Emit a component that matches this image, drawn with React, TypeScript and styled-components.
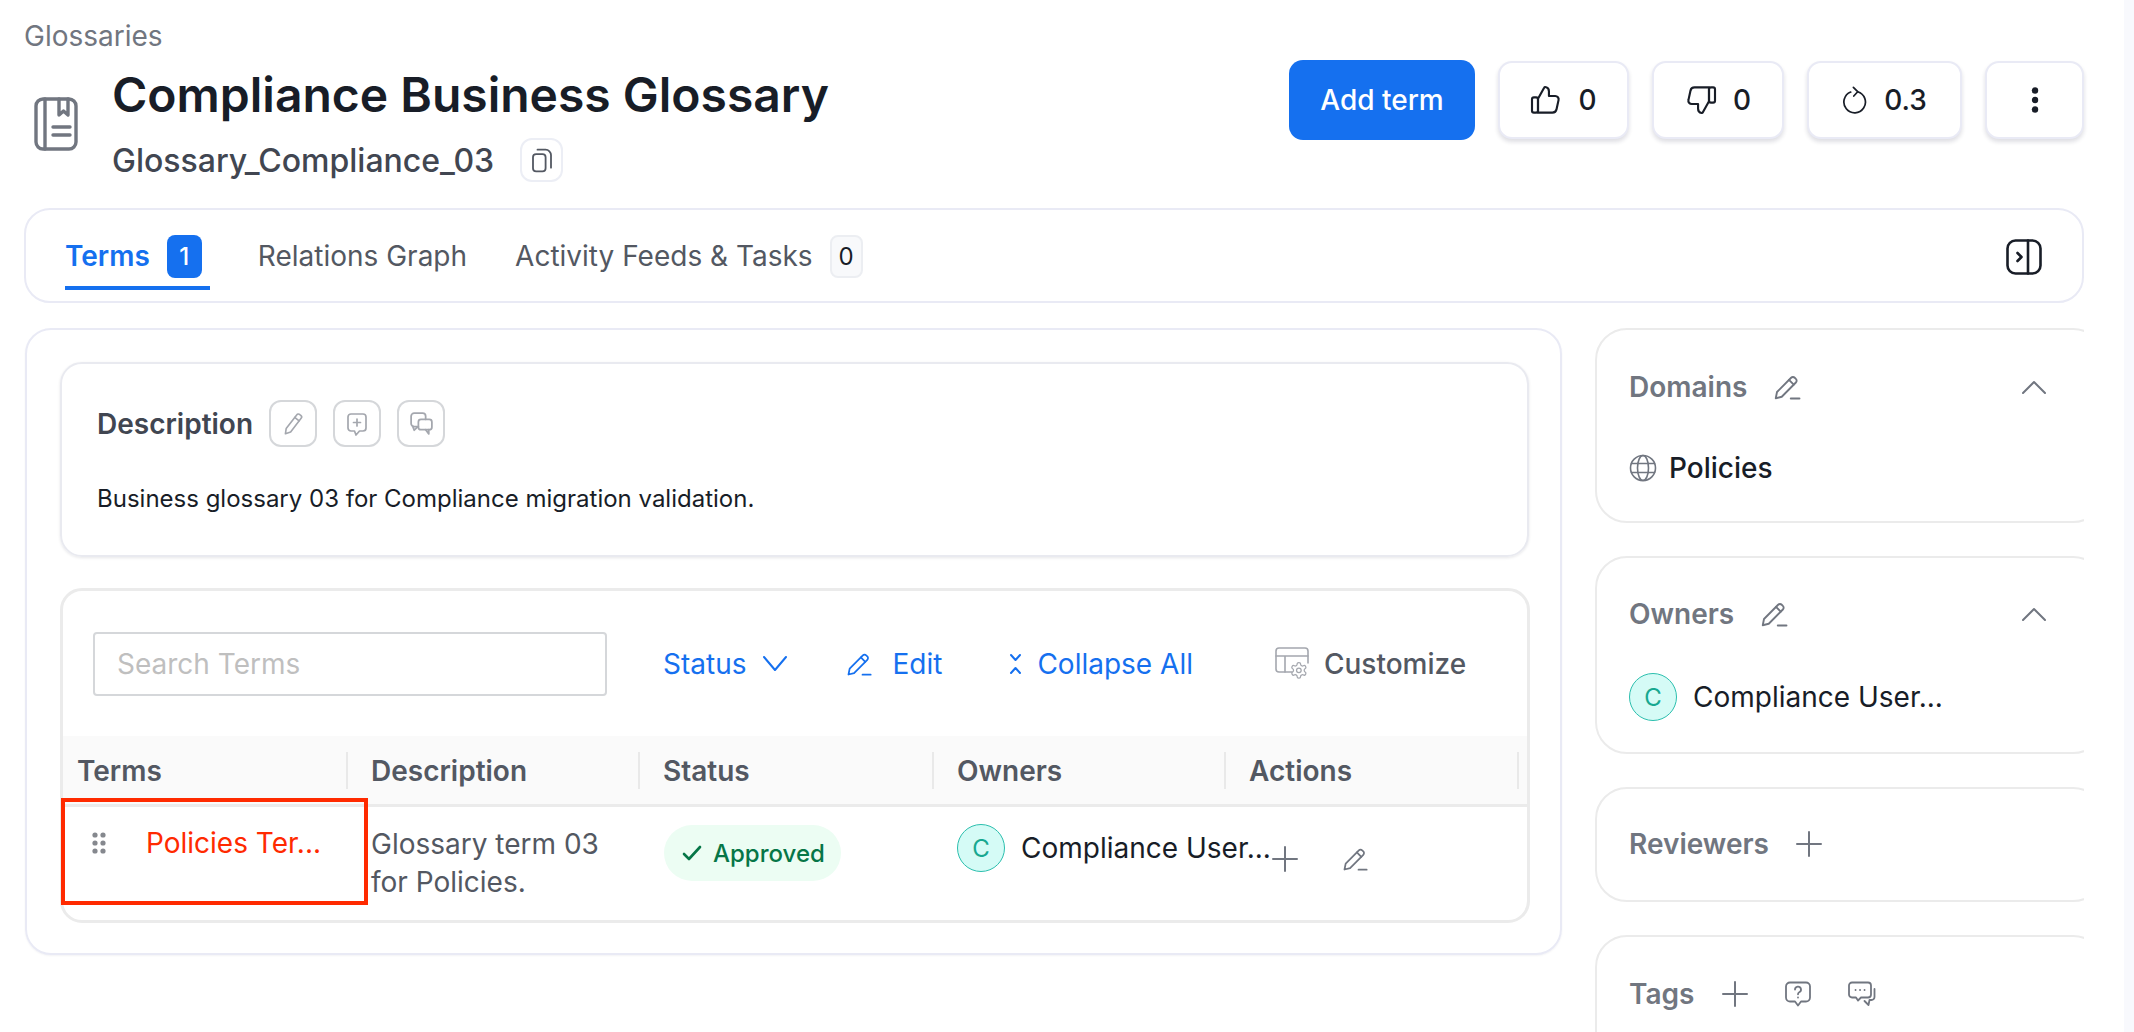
import React from 'react';
import styled, { createGlobalStyle } from 'styled-components';

const GlobalStyle = createGlobalStyle`
  html, body {
    margin: 0;
    padding: 0;
    height: 100%;
    overflow: hidden;
    background: #fff;
    font-family: Inter, "Noto Sans", sans-serif;
  }
  * { box-sizing: border-box; }
`;

const Page = styled.div`
  display: flex;
  height: 1032px;
  overflow: hidden;
`;

const Content = styled.main`
  width: 2124px;
  padding: 22px 40px 0 24px;
  flex-shrink: 0;
`;

const ScrollStrip = styled.div`
  width: 10px;
  background: #f8f9fd;
`;

const Breadcrumb = styled.div`
  height: 29px;
  line-height: 29px;
  font-size: 28px;
  color: #717680;
  margin-bottom: 9px;
`;

const Header = styled.header`
  display: flex;
  justify-content: space-between;
  align-items: flex-start;
  height: 122px;
  padding-left: 10px;
`;

const TitleGroup = styled.div`
  display: flex;
  gap: 34px;
  > svg { margin-top: 37px; flex-shrink: 0; }
`;

const Title = styled.h1`
  margin: 0;
  font-size: 48px;
  line-height: 70px;
  font-weight: 600;
  color: #181d27;
`;

const IdRow = styled.div`
  display: flex;
  align-items: center;
  gap: 26px;
  margin-top: 8px;
  height: 44px;
`;

const IdText = styled.span`
  font-size: 32px;
  font-weight: 500;
  color: #414651;
`;

const CopyButton = styled.button`
  width: 43px;
  height: 44px;
  padding: 0;
  border: 2px solid #eceef5;
  border-radius: 12px;
  background: #fff;
  display: flex;
  align-items: center;
  justify-content: center;
`;

const Actions = styled.div`
  display: flex;
  gap: 23px;
`;

const PrimaryButton = styled.button`
  width: 186px;
  height: 80px;
  border: 0;
  border-radius: 14px;
  background: #1570ef;
  color: #fff;
  font: 500 28px Inter, sans-serif;
`;

const VoteButton = styled.button<{ $width: number }>`
  width: ${(p) => p.$width}px;
  height: 78px;
  margin-top: 1px;
  border: 2px solid #e9eaf5;
  border-radius: 14px;
  background: #fff;
  box-shadow: 0 3px 4px rgba(20, 24, 60, 0.14);
  color: #181d27;
  font: 500 28px Inter, sans-serif;
  display: flex;
  align-items: center;
  justify-content: center;
  gap: 16px;
`;

const TabCard = styled.nav`
  display: flex;
  justify-content: space-between;
  align-items: center;
  height: 95px;
  margin-top: 26px;
  padding: 0 40px 0 39px;
  border: 2px solid #e9eaf5;
  border-radius: 26px;
  > svg { margin-top: 2px; }
`;

const TabList = styled.div`
  display: flex;
  gap: 48px;
  align-self: stretch;
`;

const Tab = styled.div<{ $active?: boolean }>`
  display: flex;
  align-items: center;
  gap: 17px;
  height: 58px;
  margin-top: 22px;
  padding-right: ${(p) => (p.$active ? 8 : 0)}px;
  padding-bottom: 6px;
  font-size: 28px;
  font-weight: ${(p) => (p.$active ? 600 : 400)};
  color: ${(p) => (p.$active ? '#1570ef' : '#535862')};
  border-bottom: 4px solid ${(p) => (p.$active ? '#1570ef' : 'transparent')};
`;

const TabBadge = styled.span<{ $active?: boolean }>`
  width: ${(p) => (p.$active ? 35 : 33)}px;
  height: 43px;
  border-radius: 8px;
  font-size: 24px;
  font-weight: ${(p) => (p.$active ? 500 : 400)};
  display: flex;
  align-items: center;
  justify-content: center;
  background: ${(p) => (p.$active ? '#1570ef' : '#f8f9fb')};
  color: ${(p) => (p.$active ? '#fff' : '#181d27')};
  border: ${(p) => (p.$active ? 0 : '2px solid #eceef2')};
`;

const Body = styled.div`
  display: flex;
  gap: 33px;
  margin-top: 25px;
  margin-left: 1px;
  align-items: flex-start;
`;

const MainCard = styled.section`
  width: 1537px;
  height: 627px;
  flex-shrink: 0;
  padding: 32px 31px 0 33px;
  border: 2px solid #e9eaf5;
  border-radius: 26px;
  box-shadow: 0 1px 2px rgba(20, 24, 60, 0.05);
`;

const DescriptionCard = styled.div`
  height: 195px;
  padding: 36px 26px 0 35px;
  border: 2px solid #e9eaf0;
  border-radius: 22px;
  box-shadow: 0 1px 3px rgba(20, 24, 40, 0.1);
`;

const DescriptionHead = styled.div`
  display: flex;
  align-items: center;
  gap: 16px;
`;

const DescriptionLabel = styled.span`
  font-size: 28px;
  font-weight: 600;
  color: #414651;
`;

const IconButton = styled.button`
  width: 48px;
  height: 47px;
  padding: 0;
  border: 2px solid #d5d7da;
  border-radius: 12px;
  background: #fff;
  display: flex;
  align-items: center;
  justify-content: center;
`;

const DescriptionText = styled.p`
  margin: 37px 0 0;
  font-size: 24px;
  line-height: 30px;
  color: #181d27;
`;

const TermsCard = styled.div`
  width: 1470px;
  height: 335px;
  margin-top: 31px;
  border: 3px solid #ebebeb;
  border-radius: 22px;
  overflow: visible;
`;

const Toolbar = styled.div`
  display: flex;
  align-items: center;
  height: 145px;
  padding-left: 30px;
`;

const SearchInput = styled.input`
  width: 514px;
  height: 64px;
  padding: 0 22px;
  border: 2px solid #d5d7da;
  border-radius: 4px;
  font: 400 28px Inter, sans-serif;
  &::placeholder { color: #bfbfbf; }
`;

const ToolLink = styled.span<{ $gap: number; $left: number; $muted?: boolean }>`
  display: flex;
  align-items: center;
  gap: ${(p) => p.$gap}px;
  margin-left: ${(p) => p.$left}px;
  font-size: 28px;
  font-weight: ${(p) => (p.$muted ? 500 : 400)};
  color: ${(p) => (p.$muted ? '#535862' : '#1570ef')};
`;

const TableHead = styled.div`
  display: grid;
  grid-template-columns: 285px 292px 294px 292px 293px;
  height: 71px;
  background: #fafafa;
  border-bottom: 3px solid #ebebeb;
  align-items: center;
`;

const HeadCell = styled.div<{ $first?: boolean }>`
  height: 37px;
  line-height: 39px;
  padding-left: ${(p) => (p.$first ? 14 : 23)}px;
  font-size: 28px;
  font-weight: 600;
  color: #535862;
  border-right: 2px solid #e9e9e9;
`;

const TableRow = styled.div`
  position: relative;
  display: grid;
  grid-template-columns: 285px 292px 294px 292px 293px;
  height: 110px;
`;

const RedBox = styled.div`
  position: absolute;
  left: -2px;
  top: -9px;
  width: 307px;
  height: 107px;
  border: 4px solid #ff2a00;
`;

const TermCell = styled.div`
  display: flex;
  align-items: center;
  gap: 40px;
  height: 72px;
  padding-left: 29px;
`;

const TermName = styled.span`
  font-size: 28px;
  color: #ff2a00;
`;

const DescCell = styled.div`
  padding: 18px 0 0 23px;
  font-size: 28px;
  line-height: 38px;
  color: #535862;
`;

const StatusCell = styled.div`
  padding: 18px 0 0 24px;
`;

const StatusBadge = styled.span`
  display: inline-flex;
  align-items: center;
  gap: 11px;
  width: 177px;
  height: 56px;
  padding-left: 18px;
  border-radius: 28px;
  background: #ecfdf3;
  color: #067647;
  font-size: 24px;
  font-weight: 500;
`;

const OwnerCell = styled.div`
  display: flex;
  align-items: center;
  gap: 16px;
  height: 48px;
  margin-top: 17px;
  padding-left: 23px;
`;

const Avatar = styled.span`
  width: 48px;
  height: 48px;
  flex-shrink: 0;
  border-radius: 50%;
  border: 1px solid #2bbfae;
  background: #d5fbf6;
  color: #17a890;
  font-size: 24px;
  display: flex;
  align-items: center;
  justify-content: center;
`;

const OwnerName = styled.span`
  font-size: 28px;
  white-space: nowrap;
  color: #181d27;
`;

const ActionCell = styled.div`
  display: flex;
  align-items: center;
  gap: 43px;
  height: 28px;
  margin-top: 38px;
  padding-left: 46px;
`;

const Sidebar = styled.aside`
  width: 489px;
  flex-shrink: 0;
  overflow: hidden;
  display: flex;
  flex-direction: column;
  gap: 33px;
`;

const SideCard = styled.div<{ $height: number }>`
  width: 510px;
  height: ${(p) => p.$height}px;
  padding: 0 0 0 32px;
  border: 2px solid #ebebeb;
  border-radius: 32px;
`;

const SideHead = styled.div<{ $gap: number; $top: number }>`
  display: flex;
  align-items: center;
  gap: ${(p) => p.$gap}px;
  height: 30px;
  margin-top: ${(p) => p.$top}px;
  width: 417px;
`;

const SideTitle = styled.span`
  font-size: 28px;
  font-weight: 600;
  color: #717680;
`;

const TagIcons = styled.span`
  display: flex;
  align-items: center;
  gap: 36px;
`;

const Chevron = styled.span`
  margin-left: auto;
  display: flex;
`;

const SideValue = styled.div<{ $top: number; $gap: number; $regular?: boolean }>`
  display: flex;
  align-items: center;
  gap: ${(p) => p.$gap}px;
  margin-top: ${(p) => p.$top}px;
  font-size: 28px;
  font-weight: ${(p) => (p.$regular ? 400 : 500)};
  color: #181d27;
`;

const icon = (w: number, h: number, view: string, color: string, sw = 1.5) => ({
  width: w,
  height: h,
  viewBox: view,
  fill: 'none',
  stroke: color,
  strokeWidth: sw,
  strokeLinecap: 'round' as const,
  strokeLinejoin: 'round' as const,
});

const PenLine = ({ size, color }: { size: number; color: string }) => (
  <svg {...icon(size, size, '0 0 24 24', color)}>
    <path d="M3 21l1-5L15.3 4.6a2 2 0 0 1 2.9 0l.9.9a2 2 0 0 1 0 2.9L7.8 19.8 3 21z" />
    <path d="M13.6 6.3l3.8 3.8" />
    <path d="M15 21.2h7" />
  </svg>
);

const Pencil = ({ color }: { color: string }) => (
  <svg {...icon(26, 26, '0 0 24 24', color)}>
    <path d="M5 21l.7-4.8L15.4 3.6a2 2 0 0 1 2.9-.3l.9.7a2 2 0 0 1 .3 2.8L9.8 19.4 5 21z" />
    <path d="M13.6 5.9l4 3.2" />
  </svg>
);

const Plus = ({ color }: { color: string }) => (
  <svg {...icon(26, 26, '0 0 26 26', color, 2)}>
    <path d="M13 1v24M1 13h24" />
  </svg>
);

const ChevronUp = () => (
  <svg {...icon(24, 14, '0 0 24 14', '#717680', 2)}>
    <path d="M1 13L12 2l11 11" />
  </svg>
);

const Book = () => (
  <svg {...icon(44, 54, '0 0 44 54', '#717680', 3.4)}>
    <rect x="2" y="2" width="40" height="50" rx="7" />
    <path d="M11 2v50" />
    <path d="M25 2v16l4.5-4 4.5 4V2" />
    <path d="M19 30h17M19 38h17" />
  </svg>
);

const Copy = () => (
  <svg {...icon(24, 27, '0 0 26 30', '#535862', 2)}>
    <rect x="3" y="8" width="14" height="19" rx="3.5" />
    <path d="M8 3h9a6 6 0 0 1 6 6v14" />
  </svg>
);

const ThumbUp = () => (
  <svg {...icon(32, 32, '0 0 24 24', '#181d27', 1.6)}>
    <rect x="1.5" y="10" width="4.5" height="11.5" rx="1.4" />
    <path d="M6 11l4.6-8.2c.2-.4.6-.6 1-.5 1.6.3 2.6 1.6 2.6 3.2V9h4.7c1.7 0 2.9 1.5 2.5 3.1l-1.5 6.9c-.3 1.5-1.6 2.5-3.1 2.5H6z" />
  </svg>
);

const ThumbDown = () => (
  <svg {...icon(32, 32, '0 0 24 24', '#181d27', 1.6)}>
    <g transform="rotate(180 12 12)">
      <rect x="1.5" y="10" width="4.5" height="11.5" rx="1.4" />
      <path d="M6 11l4.6-8.2c.2-.4.6-.6 1-.5 1.6.3 2.6 1.6 2.6 3.2V9h4.7c1.7 0 2.9 1.5 2.5 3.1l-1.5 6.9c-.3 1.5-1.6 2.5-3.1 2.5H6z" />
    </g>
  </svg>
);

const Version = () => (
  <svg {...icon(26, 28, '0 0 24 26', '#181d27', 1.6)}>
    <path d="M14.5 5.3A10 10 0 1 1 8 5.6" />
    <path d="M10.5 1.3l4 4-3.6 4" />
  </svg>
);

const Dots = () => (
  <svg width="8" height="26" viewBox="0 0 8 26" fill="#181d27">
    <circle cx="4" cy="3.5" r="3.2" />
    <circle cx="4" cy="13" r="3.2" />
    <circle cx="4" cy="22.5" r="3.2" />
  </svg>
);

const PanelToggle = () => (
  <svg {...icon(36, 36, '0 0 36 36', '#181d27', 2.6)}>
    <rect x="1.5" y="1.5" width="33" height="33" rx="8" />
    <path d="M22 1.5v33" />
    <path d="M11.5 14l4 4-4 4" />
  </svg>
);

const CommentPlus = () => (
  <svg {...icon(24, 26, '0 0 24 26', '#a4a7ae', 1.7)}>
    <path d="M6 3h12a3 3 0 0 1 3 3v11a3 3 0 0 1-3 3h-3.5L11 24l-1.5-4H6a3 3 0 0 1-3-3V6a3 3 0 0 1 3-3z" />
    <path d="M12 8v7M8.5 11.5h7" />
  </svg>
);

const Comments = () => (
  <svg {...icon(25, 27, '0 0 24 26', '#a4a7ae', 1.7)}>
    <path d="M9 16H5a3 3 0 0 1-3-3V6a3 3 0 0 1 3-3h8a3 3 0 0 1 3 3v3" />
    <path d="M3.5 15.5l1.5 4 3-3" />
    <rect x="9" y="9" width="13" height="10" rx="2.5" />
    <path d="M16 19l3 4v-4" />
  </svg>
);

const CollapseAll = () => (
  <svg {...icon(13, 22, '0 0 13 22', '#1570ef', 2)}>
    <path d="M2 2l4.5 5L11 2" />
    <path d="M2 20l4.5-5 4.5 5" />
  </svg>
);

const Customize = () => (
  <svg {...icon(34, 34, '0 0 34 34', '#a4a7ae', 1.6)}>
    <path d="M17 25H4a3 3 0 0 1-3-3V4a3 3 0 0 1 3-3h26a3 3 0 0 1 3 3v12" />
    <path d="M1 9h32M10 9v16" />
    <g transform="translate(14.5 14) scale(0.78)">
      <path d="M12.22 2h-.44a2 2 0 0 0-2 2v.18a2 2 0 0 1-1 1.73l-.43.25a2 2 0 0 1-2 0l-.15-.08a2 2 0 0 0-2.73.73l-.22.38a2 2 0 0 0 .73 2.73l.15.1a2 2 0 0 1 1 1.72v.51a2 2 0 0 1-1 1.74l-.15.09a2 2 0 0 0-.73 2.73l.22.38a2 2 0 0 0 2.73.73l.15-.08a2 2 0 0 1 2 0l.43.25a2 2 0 0 1 1 1.73V20a2 2 0 0 0 2 2h.44a2 2 0 0 0 2-2v-.18a2 2 0 0 1 1-1.73l.43-.25a2 2 0 0 1 2 0l.15.08a2 2 0 0 0 2.73-.73l.22-.39a2 2 0 0 0-.73-2.73l-.15-.08a2 2 0 0 1-1-1.74v-.5a2 2 0 0 1 1-1.74l.15-.09a2 2 0 0 0 .73-2.73l-.22-.38a2 2 0 0 0-2.73-.73l-.15.08a2 2 0 0 1-2 0l-.43-.25a2 2 0 0 1-1-1.73V4a2 2 0 0 0-2-2z" fill="#fff" />
      <circle cx="12" cy="12" r="3" />
    </g>
  </svg>
);

const StatusChevron = () => (
  <svg {...icon(24, 15, '0 0 24 15', '#1570ef', 2)}>
    <path d="M1 1l11 13L23 1" />
  </svg>
);

const Grip = () => (
  <svg width="14" height="22" viewBox="0 0 14 22" fill="#85888e">
    {[3, 11, 19].map((y) => (
      <g key={y}>
        <circle cx="3" cy={y} r="2.6" />
        <circle cx="11" cy={y} r="2.6" />
      </g>
    ))}
  </svg>
);

const Check = () => (
  <svg {...icon(20, 16, '0 0 20 16', '#067647', 2.6)}>
    <path d="M2 9l5 5L18 2" />
  </svg>
);

const Globe = () => (
  <svg {...icon(28, 28, '0 0 28 28', '#717680', 1.6)}>
    <circle cx="14" cy="14" r="12.5" />
    <ellipse cx="14" cy="14" rx="5.5" ry="12.5" />
    <path d="M2.5 9.5h23M2.5 18.5h23" />
  </svg>
);

const Question = () => (
  <svg {...icon(28, 26, '0 0 28 26', '#717680', 1.8)}>
    <path d="M6 1.5h16a4 4 0 0 1 4 4v11a4 4 0 0 1-4 4h-5l-3 4-3-4H6a4 4 0 0 1-4-4v-11a4 4 0 0 1 4-4z" />
    <path d="M11 8.5a3 3 0 1 1 4.2 2.8c-.8.4-1.2 1-1.2 2" />
    <path d="M14 16.4v.1" />
  </svg>
);

const Conversation = () => (
  <svg {...icon(28, 26, '0 0 28 26', '#717680', 1.8)}>
    <path d="M4 1.5h16a3 3 0 0 1 3 3v9a3 3 0 0 1-3 3h-7l-3 3-2-3H4a3 3 0 0 1-3-3v-9a3 3 0 0 1 3-3z" />
    <path d="M26.5 8v8a3 3 0 0 1-3 3h-2l-1 5-4-4" />
    <path d="M7.5 9h.1M12 9h.1M16.5 9h.1" />
  </svg>
);

export default function App() {
  return (
    <>
      <GlobalStyle />
      <Page>
        <Content>
          <Breadcrumb>Glossaries</Breadcrumb>
          <Header>
            <TitleGroup>
              <Book />
              <div>
                <Title>Compliance Business Glossary</Title>
                <IdRow>
                  <IdText>Glossary_Compliance_03</IdText>
                  <CopyButton><Copy /></CopyButton>
                </IdRow>
              </div>
            </TitleGroup>
            <Actions>
              <PrimaryButton>Add term</PrimaryButton>
              <VoteButton $width={131}><ThumbUp />0</VoteButton>
              <VoteButton $width={132}><ThumbDown />0</VoteButton>
              <VoteButton $width={155}><Version />0.3</VoteButton>
              <VoteButton $width={99}><Dots /></VoteButton>
            </Actions>
          </Header>

          <TabCard>
            <TabList>
              <Tab $active>Terms<TabBadge $active>1</TabBadge></Tab>
              <Tab>Relations Graph</Tab>
              <Tab>Activity Feeds &amp; Tasks<TabBadge>0</TabBadge></Tab>
            </TabList>
            <PanelToggle />
          </TabCard>

          <Body>
            <MainCard>
              <DescriptionCard>
                <DescriptionHead>
                  <DescriptionLabel>Description</DescriptionLabel>
                  <IconButton><Pencil color="#a4a7ae" /></IconButton>
                  <IconButton><CommentPlus /></IconButton>
                  <IconButton><Comments /></IconButton>
                </DescriptionHead>
                <DescriptionText>Business glossary 03 for Compliance migration validation.</DescriptionText>
              </DescriptionCard>

              <TermsCard>
                <Toolbar>
                  <SearchInput placeholder="Search Terms" />
                  <ToolLink $gap={17} $left={56}>Status <StatusChevron /></ToolLink>
                  <ToolLink $gap={19} $left={58}><PenLine size={28} color="#1570ef" />Edit</ToolLink>
                  <ToolLink $gap={15} $left={67}><CollapseAll />Collapse All</ToolLink>
                  <ToolLink $gap={15} $left={82} $muted><Customize />Customize</ToolLink>
                </Toolbar>
                <TableHead>
                  <HeadCell $first>Terms</HeadCell>
                  <HeadCell>Description</HeadCell>
                  <HeadCell>Status</HeadCell>
                  <HeadCell>Owners</HeadCell>
                  <HeadCell>Actions</HeadCell>
                </TableHead>
                <TableRow>
                  <TermCell><Grip /><TermName>Policies Ter...</TermName></TermCell>
                  <DescCell>Glossary term 03<br />for Policies.</DescCell>
                  <StatusCell><StatusBadge><Check />Approved</StatusBadge></StatusCell>
                  <OwnerCell><Avatar>C</Avatar><OwnerName>Compliance User...</OwnerName></OwnerCell>
                  <ActionCell><Plus color="#717680" /><PenLine size={28} color="#717680" /></ActionCell>
                  <RedBox />
                </TableRow>
              </TermsCard>
            </MainCard>

            <Sidebar>
              <SideCard $height={195}>
                <SideHead $gap={25} $top={42}>
                  <SideTitle>Domains</SideTitle>
                  <PenLine size={30} color="#717680" />
                  <Chevron><ChevronUp /></Chevron>
                </SideHead>
                <SideValue $top={49} $gap={12}><Globe />Policies</SideValue>
              </SideCard>
              <SideCard $height={198}>
                <SideHead $gap={25} $top={41}>
                  <SideTitle>Owners</SideTitle>
                  <PenLine size={30} color="#717680" />
                  <Chevron><ChevronUp /></Chevron>
                </SideHead>
                <SideValue $top={44} $gap={16} $regular><Avatar>C</Avatar>Compliance User...</SideValue>
              </SideCard>
              <SideCard $height={115}>
                <SideHead $gap={27} $top={40}>
                  <SideTitle>Reviewers</SideTitle>
                  <Plus color="#717680" />
                </SideHead>
              </SideCard>
              <SideCard $height={200}>
                <SideHead $gap={28} $top={42}>
                  <SideTitle>Tags</SideTitle>
                  <TagIcons>
                    <Plus color="#717680" />
                    <Question />
                    <Conversation />
                  </TagIcons>
                </SideHead>
              </SideCard>
            </Sidebar>
          </Body>
        </Content>
        <ScrollStrip />
      </Page>
    </>
  );
}
